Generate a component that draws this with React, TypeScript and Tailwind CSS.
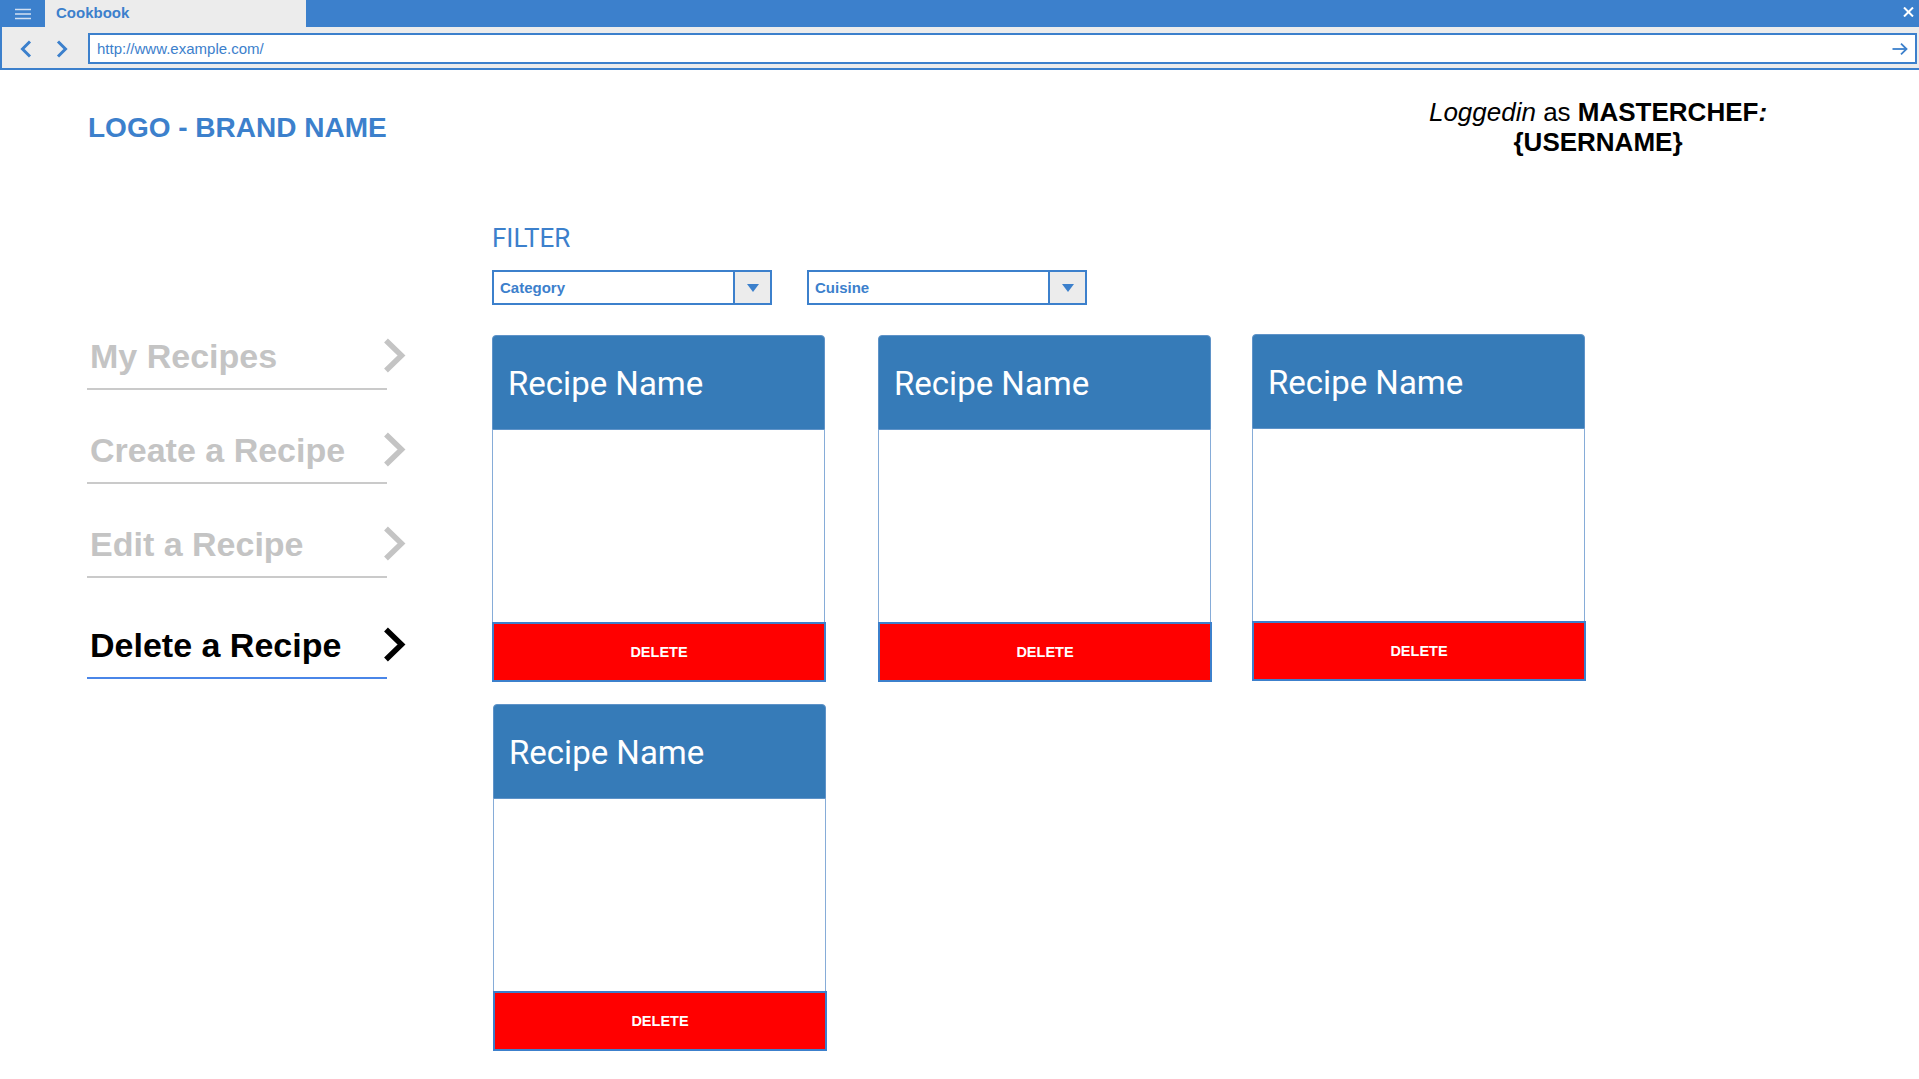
import React from 'react';

const sans = "font-['Liberation_Sans',Arial,sans-serif]";
const roboto = "font-['Roboto',Arial,sans-serif]";

const navItems = [
  { label: 'My Recipes', active: false },
  { label: 'Create a Recipe', active: false },
  { label: 'Edit a Recipe', active: false },
  { label: 'Delete a Recipe', active: true },
];

const cardOffsets = ['', 'ml-[52px]', 'ml-[40px] -mt-px', 'ml-px'];

const Chevron = ({ color }: { color: string }) => (
  <svg width="23" height="35" viewBox="0 0 23 35" className="ml-[-4px] mt-[1px] shrink-0">
    <polyline points="3,2.5 18.5,17.5 3,32.5" fill="none" stroke={color} strokeWidth="5.5" strokeLinejoin="miter" />
  </svg>
);

const BrowserChrome = () => (
  <div>
    <div className="h-[27px] bg-[#3c80cc] flex">
      <div className="w-[45px] flex items-center justify-center">
        <svg width="16" height="12" viewBox="0 0 16 12">
          <g stroke="#d3e0f2" strokeWidth="1.5">
            <line x1="0" y1="1.5" x2="16" y2="1.5" />
            <line x1="0" y1="6" x2="16" y2="6" />
            <line x1="0" y1="10.5" x2="16" y2="10.5" />
          </g>
        </svg>
      </div>
      <div className={`w-[261px] bg-[#ececec] pl-[11px] flex items-center text-[15px] font-bold text-[#3c80cc] ${sans}`}>
        Cookbook
      </div>
      <div className="flex-1" />
      <div className="w-[16px] mr-[3px] pt-[7px] flex justify-center">
        <svg width="11" height="10" viewBox="0 0 11 10">
          <g stroke="#ffffff" strokeWidth="2">
            <line x1="1" y1="0.5" x2="10" y2="9.5" />
            <line x1="10" y1="0.5" x2="1" y2="9.5" />
          </g>
        </svg>
      </div>
    </div>
    <div className="h-[43px] bg-[#ececec] border-l-2 border-b-2 border-[#3c80cc] flex items-center">
      <svg width="14" height="18" viewBox="0 0 14 18" className="ml-[17px] mt-[2px]">
        <polyline points="11,1.5 3.5,9 11,16.5" fill="none" stroke="#3c80cc" strokeWidth="3" />
      </svg>
      <svg width="14" height="18" viewBox="0 0 14 18" className="ml-[22px] mt-[2px]">
        <polyline points="3,1.5 10.5,9 3,16.5" fill="none" stroke="#3c80cc" strokeWidth="3" />
      </svg>
      <div className="ml-[19px] mr-[2px] mt-[2px] flex-1 h-[31px] bg-white border-2 border-[#3c80cc] flex items-center">
        <span className={`pl-[7px] pt-px text-[15px] text-[#3c80cc] ${sans}`}>http://www.example.com/</span>
        <div className="flex-1" />
        <svg width="16" height="12" viewBox="0 0 16 12" className="mr-[7px]">
          <g fill="none" stroke="#3c80cc" strokeWidth="1.8">
            <line x1="0.5" y1="6" x2="14.5" y2="6" />
            <polyline points="9,0.7 14.5,6 9,11.3" />
          </g>
        </svg>
      </div>
    </div>
  </div>
);

const Select = ({ label }: { label: string }) => (
  <div className="w-[280px] h-[35px] border-2 border-[#3c80cc] bg-white flex">
    <div className={`flex-1 flex items-center pl-[6px] pt-px text-[15px] font-bold text-[#3c80cc] ${sans}`}>{label}</div>
    <div className="w-[37px] bg-[#ececec] border-l-2 border-[#3c80cc] flex items-center justify-center">
      <svg width="12" height="8" viewBox="0 0 12 8">
        <polygon points="0,0 12,0 6,8" fill="#3c80cc" />
      </svg>
    </div>
  </div>
);

const RecipeCard = ({ className }: { className: string }) => (
  <div className={`w-[334px] ${className}`}>
    <div className={`w-[333px] h-[95px] bg-[#367bb8] rounded-t-[4px] border border-[#5f93c8] pl-[15px] pt-[29px] text-[33px] leading-[38px] text-white ${roboto}`}>
      Recipe Name
    </div>
    <div className="w-[333px] h-[192px] bg-white border-x border-[#86acd8]" />
    <button className={`w-[334px] h-[60px] pt-[2px] bg-[#ff0000] border-2 border-[#3c80cc] text-white text-[14.5px] font-bold ${sans}`}>
      DELETE
    </button>
  </div>
);

export default function App() {
  return (
    <div className="min-h-screen bg-white">
      <BrowserChrome />

      <div className="flex justify-between">
        <div className={`pl-[88px] pt-[42px] text-[28px] leading-[32px] font-bold text-[#3c80cc] ${sans}`}>
          LOGO - BRAND NAME
        </div>
        <div className={`mt-[27px] mr-[121px] w-[400px] text-center text-[26px] leading-[30px] text-black ${sans}`}>
          <i>Loggedin</i> as <b>MASTERCHEF<i>:</i></b>
          <br />
          <b>{'{USERNAME}'}</b>
        </div>
      </div>

      <div className="flex pl-[87px]">
        <nav className="w-[405px] pt-[180px] flex flex-col">
          {navItems.map((item, i) => (
            <div key={item.label} className={`flex items-start ${i === 2 ? 'mb-[48px]' : 'mb-[41px]'}`}>
              <div
                className={`w-[300px] pb-[12px] pl-[3px] text-[34px] leading-[39px] font-bold border-b-2 ${sans} ${
                  item.active ? 'text-black border-[#4a86e8]' : 'text-[#c4c4c4] border-[#cacaca]'
                }`}
              >
                {item.label}
              </div>
              <Chevron color={item.active ? '#000000' : '#c4c4c4'} />
            </div>
          ))}
        </nav>

        <main className="pt-[67px] flex flex-col">
          <div className={`text-[26px] leading-[29px] text-[#3c80cc] ${roboto}`}>FILTER</div>
          <div className="mt-[17px] flex gap-[35px]">
            <Select label="Category" />
            <Select label="Cuisine" />
          </div>
          <div className="mt-[30px] w-[1120px] flex flex-wrap gap-y-[22px]">
            {cardOffsets.map((c, i) => (
              <RecipeCard key={i} className={c} />
            ))}
          </div>
        </main>
      </div>
    </div>
  );
}
